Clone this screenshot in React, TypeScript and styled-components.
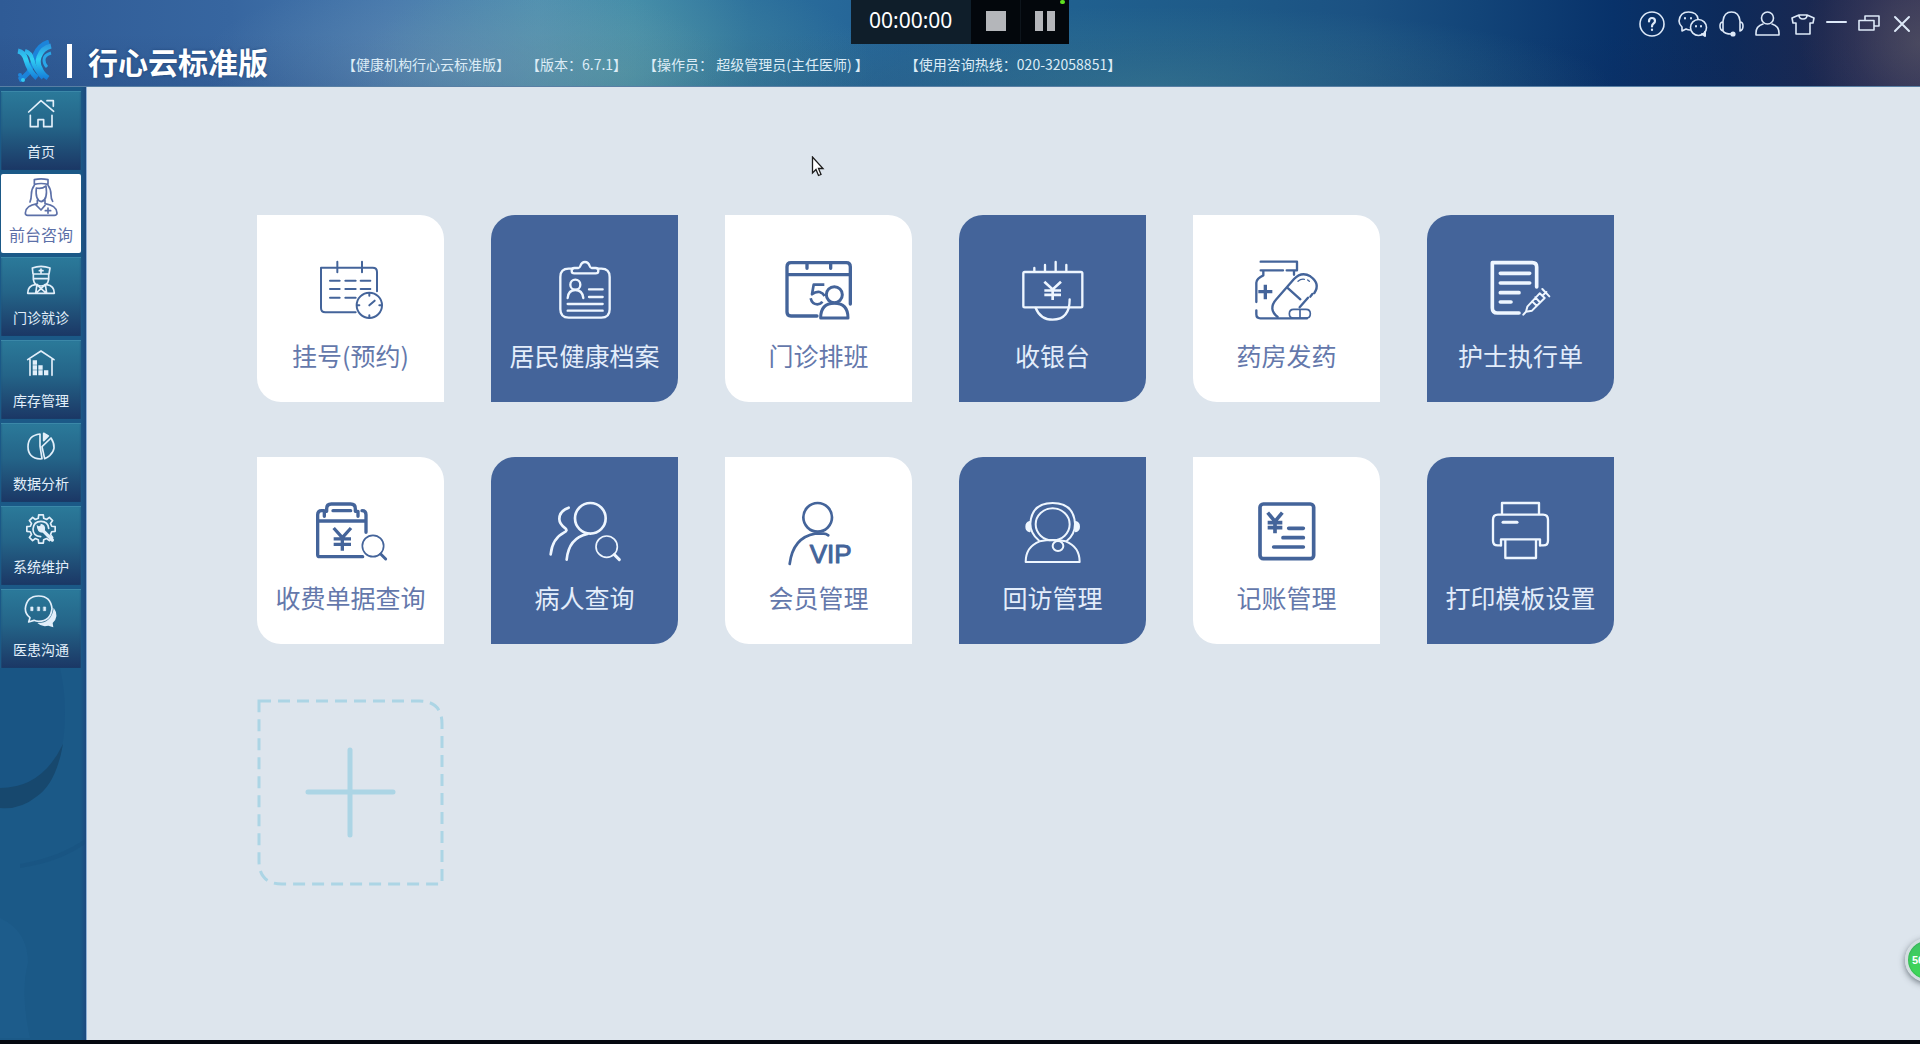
import React from 'react';
import styled, { createGlobalStyle, css } from 'styled-components';

const INK = '#44649a';
const SNOW = '#eef6ff';

const GlobalStyle = createGlobalStyle`
  *, *::before, *::after { box-sizing: border-box; }
  body {
    margin: 0;
    background: #050a12;
    font-family: 'Noto Sans CJK SC', 'Noto Sans', sans-serif;
  }
  button { font: inherit; color: inherit; border: 0; padding: 0; background: none; cursor: pointer; }
`;

/* ---------- shell ---------- */

const Shell = styled.div`
  position: relative;
  display: flex;
  flex-direction: column;
  height: 100vh;
  overflow: hidden;
  border-bottom: 4px solid #04080f;
`;

const Header = styled.header`
  display: flex;
  align-items: flex-end;
  flex: none;
  height: 87px;
  padding-left: 17px;
  color: #fff;
  border-bottom: 1px solid #587fa4;
  background:
    radial-gradient(ellipse 120px 110px at 100% 50%, rgba(86, 84, 100, 0.65), rgba(80, 72, 96, 0.25) 55%, rgba(70, 60, 90, 0) 100%),
    radial-gradient(ellipse 260px 90px at 24% 75%, rgba(112, 148, 180, 0.5), rgba(112, 148, 180, 0.2) 55%, rgba(110, 152, 180, 0) 100%),
    radial-gradient(ellipse 260px 110px at 32% 85%, rgba(92, 160, 156, 0.5), rgba(92, 160, 156, 0.2) 55%, rgba(88, 160, 150, 0) 100%),
    radial-gradient(ellipse 460px 80px at 60% 100%, rgba(60, 124, 146, 0.6), rgba(60, 124, 146, 0.25) 55%, rgba(52, 118, 146, 0) 100%),
    linear-gradient(180deg, rgba(20, 40, 90, 0) 40%, rgba(20, 40, 90, 0.14)),
    linear-gradient(90deg, #2f5b96 0%, #3766a0 12%, #4678ac 20%, #4f8fb2 28%, #428bab 33%, #2c709d 39%,
      #236296 47%, #20608f 56%, #1e5a88 64%, #1b5182 71%, #124478 77%, #08326a 84%, #0d2a5a 90%, #1c2850 95%, #333457 100%);
`;

const Brand = styled.div`
  display: flex;
  align-items: center;
  height: 50px;
`;

const BrandRule = styled.span`
  width: 5px;
  height: 34px;
  margin-left: 14px;
  background: #fff;
`;

const BrandName = styled.h1`
  margin: 0 0 0 16px;
  font-size: 30px;
  line-height: 40px;
  font-weight: 700;
  white-space: nowrap;
  text-shadow: 0 0 3px rgba(20, 50, 100, 0.6);
`;

const Facts = styled.ul`
  display: flex;
  margin: 0 0 0 74px;
  padding: 0;
  list-style: none;
  height: 34px;
  font-size: 14px;
  line-height: 24px;
  color: #dcecf6;
  white-space: pre;
`;

const Fact = styled.li<{ $gap?: number }>`
  margin-left: ${(p) => p.$gap ?? 0}px;
`;

const Controls = styled.div`
  display: flex;
  align-items: center;
  align-self: flex-start;
  gap: 11px;
  height: 48px;
  margin-left: auto;
  padding-right: 7px;
  color: #dde9f8;
`;

const Control = styled.button`
  display: flex;
  align-items: center;
  justify-content: center;
`;

/* ---------- recorder ---------- */

const Recorder = styled.div`
  position: absolute;
  top: 0;
  left: 50%;
  transform: translateX(-50%);
  display: flex;
  height: 44px;
  background: #03070c;
`;

const Clock = styled.time`
  width: 120px;
  padding-left: 18px;
  font: 400 21px/40px 'Noto Sans', sans-serif;
  color: #fff;
  background: #0f1e2a;
`;

const RecButton = styled.button`
  display: flex;
  align-items: center;
  justify-content: center;
  gap: 4px;
  width: 49px;
  height: 42px;
  & + & { border-left: 1px solid #0d141b; }
`;

const Bar = styled.span<{ $w: number }>`
  width: ${(p) => p.$w}px;
  height: 20px;
  background: #b4b6ba;
`;

const Led = styled.span`
  position: absolute;
  top: 0;
  right: 4px;
  width: 5px;
  height: 4px;
  border-radius: 2px;
  background: #5fe01f;
`;

/* ---------- sidebar ---------- */

const Body = styled.div`
  display: flex;
  flex: 1;
  min-height: 0;
`;

const Sidebar = styled.nav`
  position: relative;
  display: flex;
  flex-direction: column;
  gap: 4px;
  flex: none;
  width: 87px;
  padding: 4px 5px 0 1px;
  border-right: 1px solid #8fb0d4;
  background: linear-gradient(90deg, rgba(30, 70, 125, 0) 94%, rgba(30, 70, 125, 0.8)), #1b5987;
`;

const Swirl = styled.svg`
  position: absolute;
  left: 0;
  top: 581px;
`;

const NavButton = styled.button<{ $active?: boolean }>`
  display: flex;
  flex-direction: column;
  align-items: center;
  gap: 6px;
  height: 79px;
  padding-top: 4px;
  font-size: 14px;
  line-height: 24px;
  color: #e2effa;
  background: linear-gradient(180deg, #2b7a9a 0%, #246488 45%, #1b3765 100%);
  box-shadow: inset 0 1px 1px #3f8cab, inset 0 0 2px #1a4470;
  ${(p) =>
    p.$active &&
    css`
      font-size: 16px;
      color: #5c70a8;
      background: #fff;
      box-shadow: none;
      border-radius: 2px;
    `}
`;

/* ---------- tiles ---------- */

const Main = styled.main`
  flex: 1;
  min-width: 0;
  padding: 128px 170px 0;
  background: #dde5ed;
`;

const Tiles = styled.div`
  display: grid;
  grid-template-columns: repeat(auto-fill, 187px);
  gap: 55px 47px;
`;

const Tile = styled.button<{ $dark?: boolean }>`
  display: flex;
  flex-direction: column;
  align-items: center;
  gap: 17px;
  height: 187px;
  padding-top: 45px;
  font-size: 25px;
  line-height: 36px;
  white-space: nowrap;
  color: ${(p) => (p.$dark ? SNOW : INK)};
  background: ${(p) => (p.$dark ? INK : '#fff')};
  border-radius: ${(p) => (p.$dark ? '24px 0' : '0 24px')};
`;

const TileLabel = styled.span<{ $dark?: boolean }>`
  color: ${(p) => (p.$dark ? '#e3edfb' : '#6478ab')};
`;

const AddTile = styled.button`
  height: 187px;
  svg { display: block; }
`;

const Pointer = styled.svg`
  position: absolute;
  left: 811px;
  top: 156px;
`;

const Bubble = styled.button`
  position: absolute;
  right: -29px;
  bottom: 58px;
  width: 44px;
  height: 44px;
  padding-left: 4px;
  text-align: left;
  font: 700 11px/38px 'Liberation Sans', sans-serif;
  color: #fff;
  border: 3px solid #d4dde0;
  border-radius: 50%;
  background: linear-gradient(180deg, #3fc565, #3fd957);
  box-shadow: 0 2px 6px rgba(60, 70, 80, 0.7), inset 0 0 2px #2c8f4c;
`;

/* ---------- drawings ---------- */

type DrawProps = { x: number; y: number; sw?: number; children: React.ReactNode };

const TileArt = ({ x, y, sw = 7, children }: DrawProps) => (
  <svg width="80" height="60" viewBox={`${x} ${y} 240 180`} fill="none" stroke="currentColor" strokeWidth={sw}
    strokeLinecap="round" strokeLinejoin="round" overflow="visible" aria-hidden="true">
    {children}
  </svg>
);

const NavArt = ({ x, y, sw = 5, children }: DrawProps) => (
  <svg width="38" height="38" viewBox={`${x} ${y} 114 114`} fill="none" stroke="currentColor" strokeWidth={sw}
    strokeLinecap="round" strokeLinejoin="round" overflow="visible" aria-hidden="true">
    {children}
  </svg>
);

const Glyph = ({ w, x = 0, children }: { w: number; x?: number; children: React.ReactNode }) => (
  <svg width={w} height="26" viewBox={`${x} 0 ${w} 26`} fill="none" stroke="currentColor" strokeWidth="1.6"
    strokeLinecap="round" strokeLinejoin="round" aria-hidden="true">
    {children}
  </svg>
);

const Logo = () => (
  <svg width="36" height="42" viewBox="0 0 36 42" fill="none" strokeWidth="4" aria-hidden="true">
    <defs>
      <linearGradient id="lg" gradientUnits="userSpaceOnUse" x1="0" y1="2" x2="0" y2="40">
        <stop offset="0" stopColor="#2c8fdc" />
        <stop offset="0.45" stopColor="#30d0f4" />
        <stop offset="1" stopColor="#1478d8" />
      </linearGradient>
    </defs>
    <path d="M32 2Q22 5 18 15Q15 28 11 33Q8 37 2 40" stroke="#1c84da" strokeWidth="5" />
    <path d="M34 6Q25 8 22 17Q20 23 23 28Q25 34 31 38" stroke="url(#lg)" strokeWidth="5" />
    <path d="M34 13Q27 15 27 20Q27 24 30 27" stroke="#2aa6e8" strokeWidth="3" />
    <path d="M1 11Q7 12 9 20Q12 31 20 38" stroke="url(#lg)" strokeWidth="5" />
    <path d="M8 11Q14 13 15 19Q18 30 26 38" stroke="url(#lg)" strokeWidth="4" />
    <circle cx="3" cy="35" r="2" fill="#1f86dc" />
    <circle cx="6" cy="40" r="2" fill="#35c9f1" />
  </svg>
);

const Lens = ({ cx, cy }: { cx: number; cy: number }) => (
  <>
    <circle cx={cx} cy={cy} r="32" strokeWidth="5" />
    <path d={`M${cx + 23} ${cy + 24}l15 15`} strokeWidth="9" />
  </>
);

const Yen = ({ x, y, w, h, sw }: { x: number; y: number; w: number; h: number; sw: number }) => (
  <path strokeWidth={sw} strokeLinecap="butt"
    d={`M${x - w / 2} ${y}L${x} ${y + h * 0.42}L${x + w / 2} ${y}M${x} ${y + h * 0.42}V${y + h}M${x - w / 2} ${y + h * 0.48}h${w}M${x - w / 2} ${y + h * 0.72}h${w}`} />
);

const tiles: { label: string; art: React.ReactNode }[] = [
  {
    label: '挂号(预约)',
    art: (
      <TileArt x={211} y={182} sw={6}>
        <path d="M345 339H254q-13 0-13-13V205H396q13 0 13 13V276M290 187V219M364 187V219" />
        <path d="M268 244h29M314 244h31M360 244h29M268 269h29M314 269h31M360 269h29M268 295h29M314 295h31" />
        <circle cx="386" cy="318" r="38" />
        <path d="M386 318l16-14M386 281v8M386 348v7M349 318h7M416 318h7" />
      </TileArt>
    ),
  },
  {
    label: '居民健康档案',
    art: (
      <TileArt x={914} y={182}>
        <path d="M996 208h-11q-25 0-25 25v97q0 25 25 25h98q25 0 25-25v-97q0-25-25-25h-10" />
        <path d="M1002 222h64q8 0 8-8t-8-8h-12q-4 0-6-6-4-12-14-12t-14 12q-2 6-6 6h-12q-8 0-8 8t8 8Z" />
        <circle cx="1005" cy="256" r="15" />
        <path d="M982 296q2-24 23-24t24 24M1046 270h41M1046 293h41M982 314h105M982 334h105" />
      </TileArt>
    ),
  },
  {
    label: '门诊排班',
    art: (
      <TileArt x={236} y={182} sw={10}>
        <path d="M350 350H272q-12 0-12-12V202q0-12 12-12H438q12 0 12 12V314M260 226H450M320 192v15M391 192v15" />
        <path d="M372 256H340L335 285Q346 276 358 278 368 281 373 290M331 297Q335 315 351 315 361 315 366 307"
          strokeWidth="8" strokeLinecap="butt" />
        <circle cx="402" cy="286" r="24" strokeWidth="9" />
        <path d="M361 356q0-44 41-44t41 44Z" strokeWidth="9" />
      </TileArt>
    ),
  },
  {
    label: '收银台',
    art: (
      <TileArt x={938} y={182}>
        <rect x="969" y="218" width="177" height="106" rx="4" />
        <path d="M1002 216v-10M1034 216v-19M1066 216v-28M1098 216v-19M1006 326q14 35 51 35 51 0 51-61" />
        <Yen x={1057} y={247} w={50} h={55} sw={8} />
      </TileArt>
    ),
  },
  {
    label: '药房发药',
    art: (
      <TileArt x={230} y={182}>
        <path d="M271 187H380V213H349M338 213H271ZM279 216v12q-21 10-21 22v58M258 333v12q0 12 12 12H410M371 216v10" />
        <path d="M264 277h42M285 256v44" strokeWidth="10" strokeLinecap="butt" />
        <path d="M322 353q-30-24-4-53l53-61q23-24 49-8 31 22 12 50M426 284l-6 8M413 295l-25 29M350 264l40 36" />
        <path d="M383 246q9-8 19-6M412 242l5 4" strokeWidth="4" />
        <path d="M370 330h37q13 0 13 13t-13 13h-37q-13 0-13-13t13-13ZM389 330v26" strokeWidth="5" />
      </TileArt>
    ),
  },
  {
    label: '护士执行单',
    art: (
      <TileArt x={932} y={182} sw={11}>
        <path d="M1046 341H981q-15 0-15-15V190H1086q13 0 13 13V263" />
        <path d="M990 222h88M990 251h88M990 280h56M990 308h32" />
        <path d="M1071 322l37-40 15 14-38 38-18 3ZM1059 346l10-11M1085 306l14 13M1116 289l12-11M1116 269l21 22M1095 294l13 14" strokeWidth="6" />
      </TileArt>
    ),
  },
  {
    label: '收费单据查询',
    art: (
      <TileArt x={211} y={188} sw={10}>
        <path d="M366 352H237q-6 0-6-6V226q0-12 12-12h7M364 214q12 0 12 12v53M231 245H376" />
        <path d="M251 231v-15h7v-8q0-14 14-14h58q14 0 14 14v8h8v15M277 214h53" />
        <Yen x={305} y={266} w={52} h={68} sw={10} />
        <Lens cx={397} cy={320} />
      </TileArt>
    ),
  },
  {
    label: '病人查询',
    art: (
      <TileArt x={914} y={188} sw={8}>
        <circle cx="1050" cy="237" r="46" />
        <path d="M1041 284q-56 12-62 77M985 205q-28 10-28 34 0 15 18 28 8 7-3 12-36 18-41 66" />
        <Lens cx={1099} cy={322} />
      </TileArt>
    ),
  },
  {
    label: '会员管理',
    art: (
      <TileArt x={1616} y={188} sw={8}>
        <circle cx="1732" cy="234" r="43" />
        <path d="M1764 288q-7-5-14-5h-26q-66 12-76 91" />
        <text x="1708" y="372" fill="currentColor" stroke="currentColor" strokeWidth="3"
          fontFamily="'Liberation Sans', Arial, sans-serif" fontSize="78">VIP</text>
      </TileArt>
    ),
  },
  {
    label: '回访管理',
    art: (
      <TileArt x={218} y={188} sw={6}>
        <ellipse cx="337" cy="255" rx="51" ry="48" />
        <path d="M295 303q-25-22-25-50 4-62 67-62t67 62q0 32-25 52M256 368q0-46 42-62 39-8 78 0 42 16 42 62Z" />
        <path d="M268 248q-10 3-10 14t10 14ZM406 248q10 3 10 14t-10 14Z" fill="currentColor" />
        <ellipse cx="353" cy="320" rx="16" ry="15" fill={INK} />
      </TileArt>
    ),
  },
  {
    label: '记账管理',
    art: (
      <TileArt x={920} y={188} sw={11}>
        <rect x="959" y="194" width="161" height="164" rx="10" />
        <path d="M1045 267h44M1028 295h61M1000 323h89" />
        <Yen x={1004} y={220} w={44} h={62} sw={11} />
      </TileArt>
    ),
  },
  {
    label: '打印模板设置',
    art: (
      <TileArt x={1622} y={188}>
        <path d="M1685 223V191H1796V223M1682 318h-10q-14 0-14-14v-63q0-15 15-15h135q15 0 15 15v63q0 14-14 14h-10" />
        <path d="M1688 249h42" strokeWidth="9" />
        <path d="M1682 318V300H1799V318M1695 303V356H1787V303" />
      </TileArt>
    ),
  },
];

const gear = (() => {
  const pts: string[] = [];
  for (let i = 0; i < 8; i++) {
    const a = (i * Math.PI) / 4 - Math.PI / 2;
    [[-0.25, 33], [-0.16, 43], [0.16, 43], [0.25, 33]].forEach(([d, r]) => {
      pts.push(`${(124 + r * Math.cos(a + d)).toFixed(1)} ${(358 + r * Math.sin(a + d)).toFixed(1)}`);
    });
  }
  return `M${pts.join('L')}Z`;
})();

const navItems: { label: string; active?: boolean; art: React.ReactNode }[] = [
  {
    label: '首页',
    art: (
      <NavArt x={67} y={43}>
        <path d="M87 94L124 60L162 92M142 60H161V77M92 104V138H115V117H132V138H157V104" />
      </NavArt>
    ),
  },
  {
    label: '前台咨询',
    active: true,
    art: (
      <NavArt x={67} y={291}>
        <path d="M104 310V296q20-5 41 0V310Q124 305 104 310ZM104 313q-9 12-9 28 0 12-4 22M145 313q9 12 9 28 0 12 5 20" />
        <path d="M110 321q16 4 29-6 6 42-14 47-19-4-15-41ZM113 358v10q-36 6-36 28 0 7 7 7h80q8 0 8-7 0-22-36-28v-10M108 371l16 16 12-14" />
        <path d="M137 389h16M145 381v16" />
      </NavArt>
    ),
  },
  {
    label: '门诊就诊',
    art: (
      <NavArt x={67} y={543}>
        <path d="M100 582L98 564Q124 554 151 564L148 582ZM101 582v16q3 20 23 20t23-20v-16M101 596h46M119 572h11M124 567v11" />
        <path d="M107 614q-23 3-23 26h24L112 613 124 626 137 613 141 640h23q0-23-23-26M108 640h33L124 626Z" />
      </NavArt>
    ),
  },
  {
    label: '库存管理',
    art: (
      <NavArt x={67} y={791}>
        <path d="M84 838L124 812L163 838M91 838V885M157 838V885" />
        <path d="M99 840h13v13h-13ZM99 855h13v13h-13ZM99 870h13v15h-13ZM116 855h13v13h-13ZM116 870h13v15h-13ZM133 870h13v15h-13Z"
          fill="currentColor" stroke="none" />
      </NavArt>
    ),
  },
  {
    label: '数据分析',
    art: (
      <NavArt x={67} y={53}>
        <path d="M121 74q-36 4-36 38t37 37l5-1L121 110ZM127 112l27-26q20 31-4 53-8 7-15 9Z" />
        <path d="M132 72L146 80 132 94Z" fill="currentColor" />
      </NavArt>
    ),
  },
  {
    label: '系统维护',
    art: (
      <NavArt x={67} y={301}>
        <path d={gear} />
        <path d="M123 381q-23-2-23-23 2-23 24-23 21 0 23 21" />
        <path d="M130 363L158 391" strokeWidth="10" />
        <path d="M111 345q3 3 7 5 6-2 5-8 16 3 13 19l-8 8q-16 0-17-24Z" fill="currentColor" stroke="none" />
      </NavArt>
    ),
  },
  {
    label: '医患沟通',
    art: (
      <NavArt x={67} y={553}>
        <path d="M91 627q-14-11-14-27 4-38 40-38t40 38q-4 38-40 38-8 0-14-3l-16 5Z" />
        <path d="M94 595h6v11h-6ZM114 595h6v11h-6ZM132 595h6v11h-6Z" fill="currentColor" strokeWidth="2" />
        <path d="M162 597q18 25-3 46l2 13-15-5q-20 5-33-8 44 0 49-46Z" fill="currentColor" stroke="none" />
      </NavArt>
    ),
  },
];

const controls: { name: string; art: React.ReactNode }[] = [
  {
    name: '帮助',
    art: (
      <Glyph w={30} x={-2}>
        <circle cx="13" cy="13" r="12" />
        <path d="M10 10.500q0-3.500 3-3.500t3 3q0 1.500-1.500 2.500t-1.500 3M13 18.500v.5" strokeWidth="2.200" />
      </Glyph>
    ),
  },
  {
    name: '微信',
    art: (
      <Glyph w={30}>
        <path d="M12 19q-2 0-4-1l-4 2v-4Q1 13 1 10q1-9 9.500-9T20 8" />
        <circle cx="20.500" cy="16.500" r="8" />
        <path d="M24 23l3 2v-4M7 7v.5M13 7v.5M18 15v.5M23 15v.5" strokeWidth="2" />
      </Glyph>
    ),
  },
  {
    name: '客服',
    art: (
      <Glyph w={25}>
        <path d="M4 20V10Q5 1 12.500 1T21 10V20M4 11q-3 0-3 4t3 5M21 11q3 0 3 4t-3 5M4 20q2 3 8 3" />
        <circle cx="14" cy="23" r="1.800" fill="currentColor" />
      </Glyph>
    ),
  },
  {
    name: '用户',
    art: (
      <Glyph w={25}>
        <ellipse cx="12.500" cy="7" rx="6" ry="6" />
        <path d="M8 13Q1 15 1 22v2H24v-2q0-7-7-9" />
      </Glyph>
    ),
  },
  {
    name: '换肤',
    art: (
      <Glyph w={24}>
        <path d="M8 4L1 7l1 5h3v11h14V12h3l1-5-7-3M8 4q0 4 4 4t4-4ZM9 4h6" />
      </Glyph>
    ),
  },
  { name: '最小化', art: <Glyph w={21}><path d="M1 11H20" strokeWidth="2" /></Glyph> },
  { name: '还原', art: <Glyph w={22}><path d="M7 9V5H21V15H17M1 9.500H16V19H1Z" /></Glyph> },
  { name: '关闭', art: <Glyph w={22} x={-2}><path d="M2 6L16 20M16 6L2 20" strokeWidth="2" /></Glyph> },
];

export default function App() {
  return (
    <Shell>
      <GlobalStyle />
      <Header>
        <Brand>
          <Logo />
          <BrandRule />
          <BrandName>行心云标准版</BrandName>
        </Brand>
        <Facts>
          <Fact>【健康机构行心云标准版】</Fact>
          <Fact $gap={16}>【版本：6.7.1】</Fact>
          <Fact $gap={16}>【操作员： 超级管理员(主任医师) 】</Fact>
          <Fact $gap={36}>【使用咨询热线：020-32058851】</Fact>
        </Facts>
        <Controls>
          {controls.map((c) => (
            <Control key={c.name} type="button" aria-label={c.name}>{c.art}</Control>
          ))}
        </Controls>
      </Header>

      <Body>
        <Sidebar>
          <Swirl width="85" height="370" viewBox="0 0 85 370" aria-hidden="true">
            <path d="M0 0H60Q70 45 60 90Q40 120 0 128Z" fill="#185181" opacity="0.5" />
            <path d="M0 120Q42 120 63 76Q56 116 36 129Q20 142 0 140Z" fill="#17486e" />
            <path d="M20 196Q60 189 85 171V176Q60 194 20 200Z" fill="#174f7d" opacity="0.4" />
            <path d="M0 250Q28 263 28 295Q20 325 30 370H0Z" fill="#206190" opacity="0.4" />
          </Swirl>
          {navItems.map((n) => (
            <NavButton key={n.label} type="button" $active={n.active} aria-current={n.active ? 'page' : undefined}>
              {n.art}
              <span>{n.label}</span>
            </NavButton>
          ))}
        </Sidebar>

        <Main>
          <Tiles>
            {tiles.map((t, i) => (
              <Tile key={t.label} type="button" $dark={i % 2 === 1}>
                {t.art}
                <TileLabel $dark={i % 2 === 1}>{t.label}</TileLabel>
              </Tile>
            ))}
            <AddTile type="button" aria-label="添加">
              <svg width="187" height="187" viewBox="0 0 187 187" fill="none" stroke="#acd5e5">
                <path d="M2 2H162Q185 2 185 25V185H25Q2 185 2 162Z" strokeWidth="3" strokeDasharray="12 7" />
                <path d="M51 93H136M93 51V136" strokeWidth="5" strokeLinecap="round" />
              </svg>
            </AddTile>
          </Tiles>
        </Main>
      </Body>

      <Recorder>
        <Clock>00:00:00</Clock>
        <RecButton type="button" aria-label="停止"><Bar $w={20} /></RecButton>
        <RecButton type="button" aria-label="暂停"><Bar $w={8} /><Bar $w={8} /></RecButton>
        <Led />
      </Recorder>

      <Pointer width="14" height="22" viewBox="0 0 14 22" aria-hidden="true">
        <path d="M1.500 1V17L5 13.500 7.500 19.500 10 18.500 7.500 12.500H12Z" fill="#fff" stroke="#1c1c1c" strokeWidth="1.300" />
      </Pointer>
      <Bubble type="button">56</Bubble>
    </Shell>
  );
}
